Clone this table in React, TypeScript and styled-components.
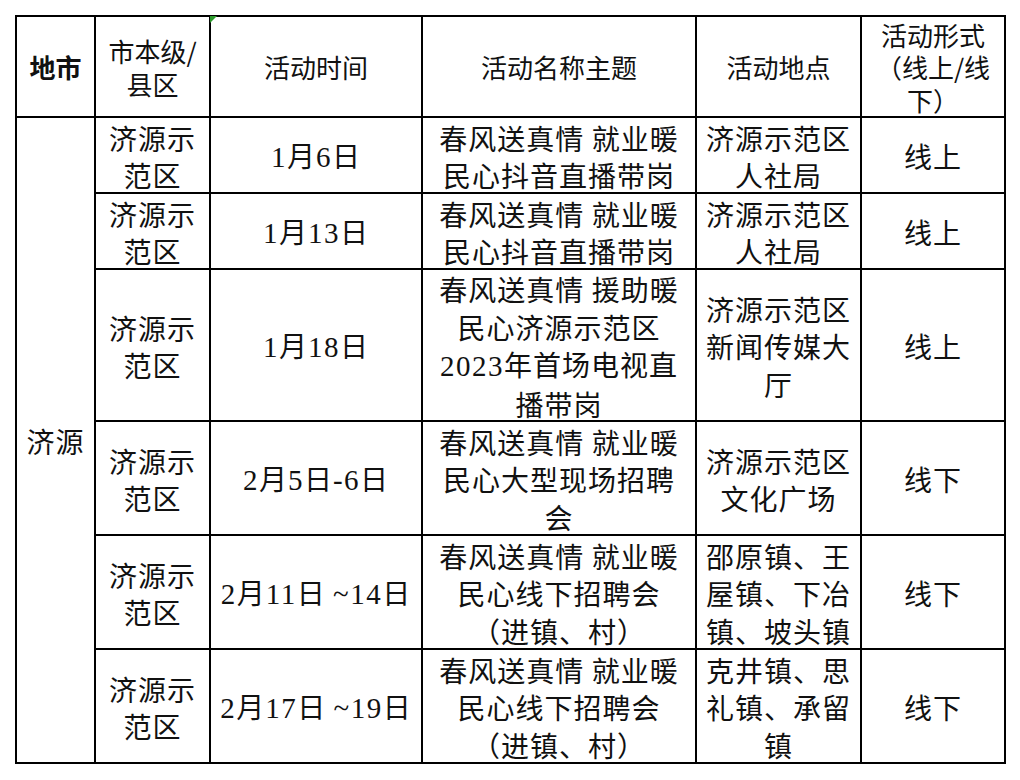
import styled, { createGlobalStyle } from 'styled-components';

interface Activity {
  district: string[];
  time: string;
  name: string[];
  place: string[];
  mode: string;
}

const activities: Activity[] = [
  {
    district: ['济源示', '范区'],
    time: '1月6日',
    name: ['春风送真情 就业暖', '民心抖音直播带岗'],
    place: ['济源示范区', '人社局'],
    mode: '线上',
  },
  {
    district: ['济源示', '范区'],
    time: '1月13日',
    name: ['春风送真情 就业暖', '民心抖音直播带岗'],
    place: ['济源示范区', '人社局'],
    mode: '线上',
  },
  {
    district: ['济源示', '范区'],
    time: '1月18日',
    name: ['春风送真情 援助暖', '民心济源示范区', '2023年首场电视直', '播带岗'],
    place: ['济源示范区', '新闻传媒大', '厅'],
    mode: '线上',
  },
  {
    district: ['济源示', '范区'],
    time: '2月5日-6日',
    name: ['春风送真情 就业暖', '民心大型现场招聘', '会'],
    place: ['济源示范区', '文化广场'],
    mode: '线下',
  },
  {
    district: ['济源示', '范区'],
    time: '2月11日 ~14日',
    name: ['春风送真情 就业暖', '民心线下招聘会', '（进镇、村）'],
    place: ['邵原镇、王', '屋镇、下冶', '镇、坡头镇'],
    mode: '线下',
  },
  {
    district: ['济源示', '范区'],
    time: '2月17日 ~19日',
    name: ['春风送真情 就业暖', '民心线下招聘会', '（进镇、村）'],
    place: ['克井镇、思', '礼镇、承留', '镇'],
    mode: '线下',
  },
];

const GlobalStyle = createGlobalStyle`
  html, body {
    margin: 0;
    padding: 0;
    background: #ffffff;
  }
  body {
    font-family: "Noto Sans CJK SC", sans-serif;
    color: #111;
  }
`;

const Page = styled.div`
  padding: 15px 0 0 15px;
`;

const Sheet = styled.div`
  display: grid;
  grid-template-columns: 77px 113px 210px 272px 163px 142px;
  grid-template-rows: 99px 74px 74px 150px 112px 112px 112px;
  gap: 2px;
  padding: 2px;
  width: max-content;
  background: #000;
`;

const Cell = styled.div<{ $head?: boolean; $bold?: boolean; $span?: number; $mark?: boolean }>`
  position: relative;
  display: flex;
  flex-direction: column;
  align-items: center;
  justify-content: center;
  padding-top: ${({ $head }) => ($head ? '2px' : '4px')};
  background: #fff;
  text-align: center;
  white-space: nowrap;
  font-size: ${({ $head }) => ($head ? '26px' : '28px')};
  line-height: ${({ $head }) => ($head ? '32.5px' : '37.5px')};
  letter-spacing: ${({ $head }) => ($head ? '0' : '1px')};
  font-family: "Noto Sans CJK SC", sans-serif;
  font-weight: ${({ $bold }) => ($bold ? 700 : 400)};
  ${({ $span }) => ($span ? `grid-row: span ${$span};` : '')}

  ${({ $mark }) =>
    $mark
      ? `&::before {
    content: '';
    position: absolute;
    left: -1px;
    top: -1px;
    border-top: 7px solid #2c9a2c;
    border-right: 7px solid transparent;
  }`
      : ''}
`;

const Line = styled.span`
  display: block;
`;

// latin digits and punctuation of the sheet are set in a serif face
const Num = styled.span`
  font-family: "Liberation Serif", "Times New Roman", serif;
  font-size: 29px;
  letter-spacing: 1.5px;
`;

function Text({ value }: { value: string }) {
  const parts = value.split(/([0-9~\-]+)/);
  return (
    <>
      {parts.map((p, i) => (i % 2 === 1 ? <Num key={i}>{p}</Num> : p))}
    </>
  );
}

function Lines({ items }: { items: string[] }) {
  return (
    <>
      {items.map((t, i) => (
        <Line key={i}>
          <Text value={t} />
        </Line>
      ))}
    </>
  );
}

function Row({ activity }: { activity: Activity }) {
  return (
    <>
      <Cell>
        <Lines items={activity.district} />
      </Cell>
      <Cell>
        <Lines items={[activity.time]} />
      </Cell>
      <Cell>
        <Lines items={activity.name} />
      </Cell>
      <Cell>
        <Lines items={activity.place} />
      </Cell>
      <Cell>{activity.mode}</Cell>
    </>
  );
}

export default function App() {
  return (
    <Page lang="zh-CN">
      <GlobalStyle />
      <Sheet>
        <Cell $head $bold>地市</Cell>
        <Cell $head>
          <Lines items={['市本级/', '县区']} />
        </Cell>
        <Cell $head $mark>活动时间</Cell>
        <Cell $head>活动名称主题</Cell>
        <Cell $head>活动地点</Cell>
        <Cell $head>
          <Lines items={['活动形式', '（线上/线', '下）']} />
        </Cell>

        <Cell $span={6}>济源</Cell>
        {activities.map((a, i) => (
          <Row key={i} activity={a} />
        ))}
      </Sheet>
    </Page>
  );
}
